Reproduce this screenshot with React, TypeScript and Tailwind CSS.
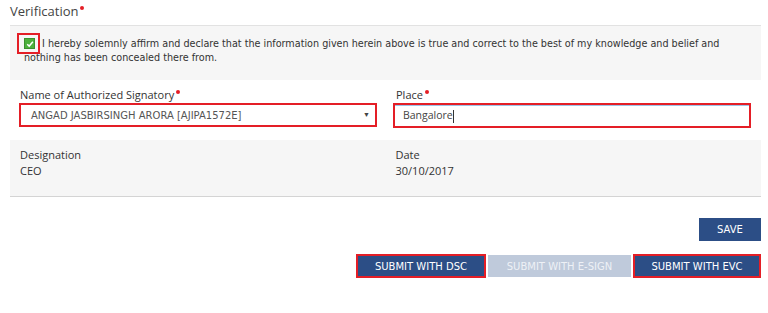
import React from 'react';

const Req = () => (
  <span className="inline-block w-[4px] h-[4px] rounded-full bg-[#e41e26] ml-[2px] align-top mt-[3px]" />
);

const App = () => {
  return (
    <div
      className="w-[768px] h-[313px] bg-white pl-[10px] pr-[7px] text-[#333]"
      style={{ fontFamily: '"Open Sans", sans-serif' }}
    >
      <div className="h-[25px] pt-[3px] text-[13px] leading-[17px] text-[#444]">
        Verification
        <Req />
      </div>

      {/* declaration */}
      <div className="h-[55px] bg-[#f6f6f6] border-t border-[#e2e2e2] pl-[14px] pr-[30px] pt-[11px]">
        <p
          className="text-[9.65px] leading-[14px] text-[#333]"
          style={{ fontFamily: '"DejaVu Sans", Verdana, sans-serif' }}
        >
          <span className="relative inline-block w-[11px] h-[11px] align-[-2px] mr-[7px]">
            <span className="absolute -left-[7px] -top-[5px] w-[23px] h-[21px] border-2 border-[#e41e26]" />
            <span className="absolute inset-0 bg-[#4caf3c] border border-[#3b8f2e] flex items-center justify-center">
              <svg viewBox="0 0 10 10" className="w-[8px] h-[8px]">
                <path d="M1.5 5.2 L4 7.6 L8.6 2.2" fill="none" stroke="white" strokeWidth="1.8" />
              </svg>
            </span>
          </span>
          I hereby solemnly affirm and declare that the information given herein above is true and correct to the best of my knowledge and belief and nothing has been concealed there from.
        </p>
      </div>

      {/* signatory / place */}
      <div className="h-[60px] grid grid-cols-2 gap-[16px] pl-[9px] pr-[10px] pt-[7px]">
        <div>
          <div className="pl-[1px] text-[11px] leading-[16px] h-[16px]">
            Name of Authorized Signatory
            <Req />
          </div>
          <div className="h-[24px] border-2 border-[#e41e26] bg-white flex items-center justify-between pl-[10px] pr-[5px]">
            <span
              className="text-[10px] text-[#555]"
              style={{ fontFamily: '"DejaVu Sans", Verdana, sans-serif' }}
            >
              ANGAD JASBIRSINGH ARORA [AJIPA1572E]
            </span>
            <span className="text-[7px] text-[#444]">▼</span>
          </div>
        </div>
        <div>
          <div className="pl-[3px] text-[11px] leading-[16px] h-[16px]">
            Place
            <Req />
          </div>
          <div className="h-[25px] border-2 border-[#e41e26]">
            <div className="h-full border-t border-[#9cc4e8] flex items-center pl-[8px] text-[10.5px] text-[#444]">
              Bangalore
              <span className="inline-block w-px h-[13px] bg-[#333]" />
            </div>
          </div>
        </div>
      </div>

      {/* designation / date */}
      <div className="h-[57px] bg-[#f6f6f6] border-b border-[#d4d4d4] grid grid-cols-2 gap-[16px] pl-[10px] pr-[10px] pt-[7px] text-[11px] leading-[16px]">
        <div>
          <div>Designation</div>
          <div>CEO</div>
        </div>
        <div className="pl-[2px]">
          <div>Date</div>
          <div>30/10/2017</div>
        </div>
      </div>

      <div
        className="flex flex-col items-end text-[10px]"
        style={{ fontFamily: '"DejaVu Sans", Verdana, sans-serif' }}
      >
        <button className="mt-[21px] w-[62px] h-[23px] bg-[#2c4e86] text-white">SAVE</button>
        <div className="mt-[13px] flex items-center">
          <button className="w-[130px] h-[24px] border-2 border-[#e41e26] bg-[#2c4e86] text-white">
            SUBMIT WITH DSC
          </button>
          <button className="ml-[2px] w-[143px] h-[22px] bg-[#bfcadb] text-[#eef1f6]">
            SUBMIT WITH E-SIGN
          </button>
          <button className="ml-[2px] w-[128px] h-[24px] border-2 border-[#e41e26] bg-[#2c4e86] text-white">
            SUBMIT WITH EVC
          </button>
        </div>
      </div>
    </div>
  );
};

export default App;
